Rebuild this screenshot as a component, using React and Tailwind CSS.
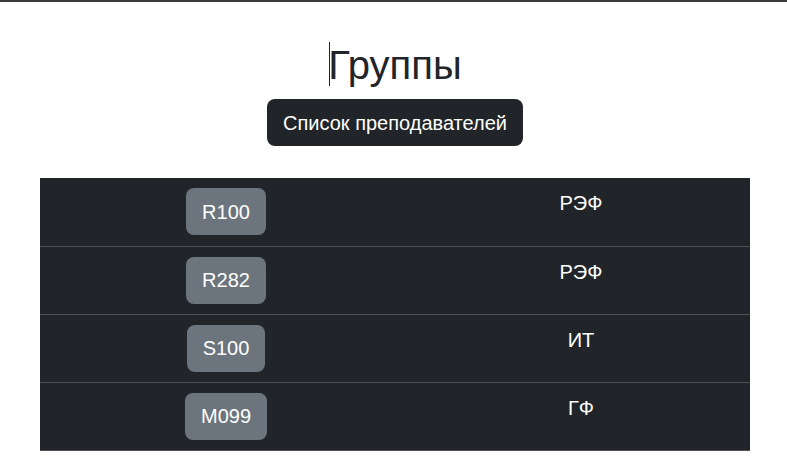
import React from "react";

const groups = [
  { code: "R100", faculty: "РЭФ" },
  { code: "R282", faculty: "РЭФ" },
  { code: "S100", faculty: "ИТ" },
  { code: "M099", faculty: "ГФ" },
];

export default function App() {
  return (
    <div
      className="min-h-[475px] bg-white text-[#212529]"
      style={{ fontFamily: '"Liberation Sans", Arial, sans-serif' }}
    >
      <div className="h-[2px] bg-[#3b3b3b]" />

      <div className="ml-[40px] w-[710px] pt-[39px]">
        <h1 className="flex justify-center items-center text-[40px] leading-[48px] font-normal">
          <span className="relative">
            <span className="absolute left-[1px] top-[1px] h-[44px] w-px bg-[#212529]" />
            Группы
          </span>
        </h1>

        <div className="mt-[10px] flex justify-center">
          <button className="h-[47px] px-4 rounded-lg bg-[#212529] text-white text-[20px] leading-[30px]">
            Список преподавателей
          </button>
        </div>

        <table className="mt-[32px] w-full table-fixed border-collapse bg-[#212529] text-white">
          <colgroup>
            <col className="w-[372px]" />
            <col className="w-[338px]" />
          </colgroup>
          <tbody>
            {groups.map((g) => (
              <tr key={g.code} className="border-b border-[#4d5154]">
                <td className="h-[68px] pt-[10px] align-top text-center">
                  <button className="h-[47px] px-4 rounded-lg bg-[#6c757d] text-white text-[20px] leading-[30px]">
                    {g.code}
                  </button>
                </td>
                <td className="h-[68px] pt-[10px] align-top text-center text-[20px] leading-[30px]">
                  {g.faculty}
                </td>
              </tr>
            ))}
          </tbody>
        </table>
      </div>
    </div>
  );
}
